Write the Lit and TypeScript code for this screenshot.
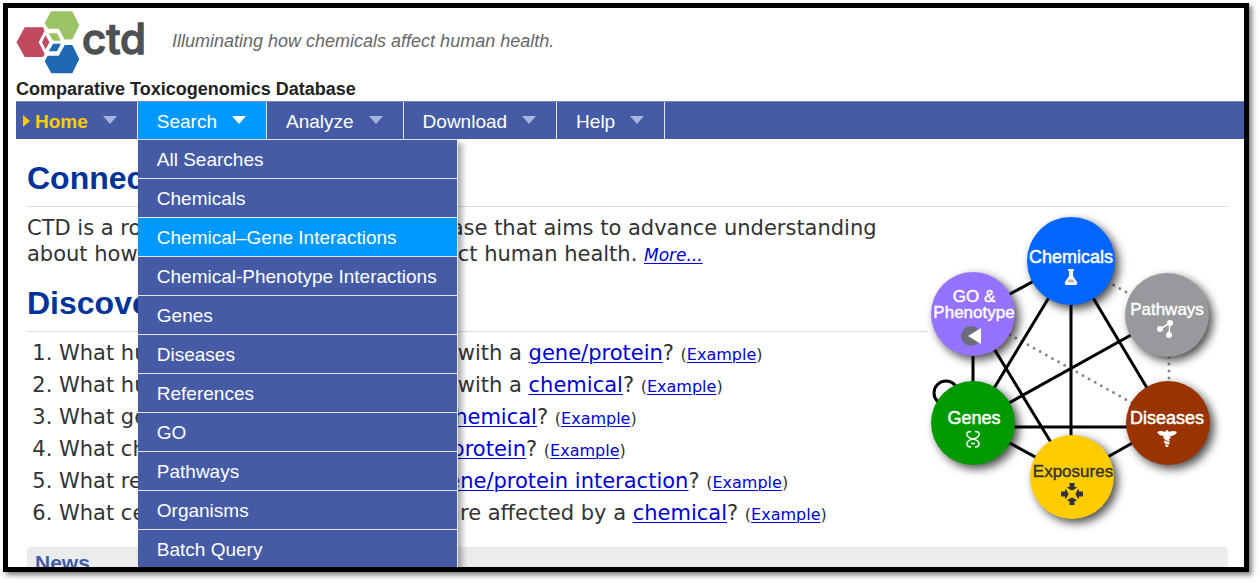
import { LitElement, html, css, svg } from "lit";
import { customElement } from "lit/decorators.js";

const MENU = ["Analyze", "Download", "Help"];
const SEARCH_ITEMS = [
  "All Searches",
  "Chemicals",
  "Chemical–Gene Interactions",
  "Chemical-Phenotype Interactions",
  "Genes",
  "Diseases",
  "References",
  "GO",
  "Pathways",
  "Organisms",
  "Batch Query",
];
const QUESTIONS: [string, string][] = [
  ["What human diseases are associated with a ", "gene/protein"],
  ["What human diseases are associated with a ", "chemical"],
  ["What genes/proteins interact with a ", "chemical"],
  ["What chemicals interact with a ", "gene/protein"],
  ["What references report a ", "chemical–gene/protein interaction"],
  ["What cellular functions or processes are affected by a ", "chemical"],
];

@customElement("ctd-logo")
class CtdLogo extends LitElement {
  static styles = css`
    :host { display: block; }
    svg { display: block; }
    .word { font: 500 42px Inter, "Liberation Sans", sans-serif; fill: #4d5054; stroke: #4d5054; stroke-width: 1.4; }
  `;
  render() {
    return html`<svg width="134" height="64" viewBox="0 0 134 64" role="img" aria-label="ctd">
      <path fill="#9bc366" d="M35 1.3H56.3L63.3 15.3 56.3 29.6H48.7L42.7 18.7H32L28.7 13z" />
      <path fill="#c04a60" d="M8.7 17.3H27L28.6 20.7 22.7 32.3 28.7 44 26.9 47H8.7L.5 32.3z" />
      <path fill="#1f69b3" d="M63.3 49L56.3 63.3H35.3L28.7 51.3 31.6 45.7H42.7L48.7 35H56.3z" />
      <path fill="#9bc366" d="M32.8 23.3H41L44.9 30.7H37z" />
      <path fill="#c04a60" d="M29.5 25.3L33.5 32.3 29.5 39.3 26 32.3z" />
      <path fill="#1f69b3" d="M37 33.8H44.9L41 41.3H32.8z" />
      <text class="word" x="66" y="44">ctd</text>
    </svg>`;
  }
}

@customElement("ctd-diagram")
class CtdDiagram extends LitElement {
  static styles = css`
    :host { display: block; padding-top: 1px; }
    svg { display: block; overflow: visible; }
    .edge { stroke: #000; stroke-width: 3; fill: none; }
    .dots { stroke: #8a8a8a; stroke-width: 3; stroke-linecap: round; stroke-dasharray: 0 7; }
    .node { filter: drop-shadow(4px 4px 5px rgba(0, 0, 0, 0.7)); }
    text { font: 18px "Liberation Sans", sans-serif; text-anchor: middle; fill: #fff; stroke: #fff; stroke-width: 0.5; }
    .small { font-size: 17px; stroke-width: 0.4; }
    .dark { fill: #333; stroke: #333; }
  `;
  private line(a: number[], b: number[], cls: string) {
    return svg`<line class=${cls} x1=${a[0]} y1=${a[1]} x2=${b[0]} y2=${b[1]} />`;
  }
  render() {
    const chem = [143, 53], go = [45, 106], path = [239, 107], gene = [45, 215], dis = [240, 215], exp = [144, 269];
    const solid = [[go, chem], [chem, gene], [chem, [143, 269]], [chem, dis], [go, gene], [go, exp], [path, gene], [gene, exp], [exp, dis]];
    const dotted = [[go, dis], [chem, path], [[241, 107], [241, 215]]];
    const nodes: [number[], string, number][] = [
      [chem, "#0066ff", 44], [go, "#9673ff", 42], [path, "#97999c", 42],
      [gene, "#009900", 42], [dis, "#993300", 42], [exp, "#ffcc00", 42],
    ];
    return html`<svg width="300" height="330" viewBox="0 0 300 330" role="img" aria-label="CTD data relationships">
      ${dotted.map(([a, b]) => this.line(a, b, "dots"))}
      ${solid.map(([a, b]) => this.line(a, b, "edge"))}
      <line class="edge" x1="45" y1="219" x2="241" y2="219" />
      <circle class="edge" cx="18" cy="185" r="12" />
      ${nodes.map(([c, fill, r]) => svg`<circle class="node" cx=${c[0]} cy=${c[1]} r=${r} fill=${fill} />`)}
      <text x="143" y="55">Chemicals</text>
      <text class="small" x="46" y="94">GO &amp;</text>
      <text class="small" x="46" y="110">Phenotype</text>
      <text class="small" x="239" y="107">Pathways</text>
      <text x="46" y="216">Genes</text>
      <text x="239" y="216">Diseases</text>
      <text class="small dark" x="145" y="269">Exposures</text>
      <path fill="#fff" d="M140 61h6v2h-1v5l4 6q1 3-2 3h-8q-3 0-2-3l4-6v-5h-1z" />
      <ellipse cx="143" cy="73" rx="3.5" ry="1.8" fill="#bbb" />
      <circle cx="43" cy="128" r="10" fill="#6b6b7d" />
      <path fill="#fff" d="M40 128l13-8v16z" />
      <path d="M242 115l-10 6M242 115l-1 12" fill="none" stroke="#fff" stroke-width="1.5" />
      <g fill="#fff"><circle cx="232" cy="121" r="3" /><circle cx="242" cy="115" r="3" /><circle cx="241" cy="127" r="3" /></g>
      <path d="M43 223.500q-5 0-4 3.500 1 3 6 4 5 1 6 4 .5 4-4 4M47 223.500q5 0 4 3.500-1 3-6 4-5 1-6 4-.5 4 4 4M43 235.500h4" fill="none" stroke="#fff" stroke-width="1.500" />
      <path fill="#fff" d="M229 224q4-2 8 0 1-2 2-2t2 2q4-2 8 0-2 4-7 4l1 2-2 1 1 3-1 2-1 3h-2l-1-3-1-2 1-3-2-1 1-2q-5 0-7-4z" />
      <path d="M236 232l6 2M236.500 235.500l5 2" stroke="#930" stroke-width=".8" />
      <g fill="#333">
        ${[0, 90, 180, 270].map((a) => svg`<path transform="translate(144 286) rotate(${a})" d="M-2.500 -11h5v4h2.500l-1 1.500-4 2-4-2-1-1.500h2.500z" />`)}
      </g>
    </svg>`;
  }
}

@customElement("app-root")
class AppRoot extends LitElement {
  static styles = css`
    :host {
      display: block;
      box-sizing: border-box;
      height: 100vh;
      padding: 3px 11px 11px 3px;
      background: #fff;
      color: #333;
      font: 21px/26px "DejaVu Sans", sans-serif;
    }
    * { box-sizing: border-box; }
    a { color: #0000d8; text-decoration-thickness: 1px; text-underline-offset: 2px; }
    .frame {
      height: 100%;
      overflow: hidden;
      border: 5px solid #000;
      background: #fff;
      box-shadow: 3px 3px 5px rgba(0, 0, 0, 0.5);
    }
    header { padding: 2px 8px 1px; font-family: "Liberation Sans", sans-serif; }
    .brand { display: flex; gap: 22px; }
    .tagline { margin: 0; padding-top: 18px; font-size: 18px; line-height: 26px; font-style: italic; color: #666; }
    .name { margin: 4px 0 0; font-size: 18px; line-height: 22px; font-weight: bold; color: #222; }
    nav {
      display: flex;
      height: 38px;
      margin-left: 8px;
      background: #455ba6;
      border-top: 1px solid #7d8cc4;
      font: 19px/37px "Liberation Sans", sans-serif;
    }
    .cell { position: relative; border-right: 1px solid #e4e8f4; }
    .top { display: flex; align-items: center; gap: 15px; height: 37px; padding: 2px 20px 0 19px; color: #fff; text-decoration: none; }
    .top::after { content: ""; margin-bottom: 3px; border: 7px solid transparent; border-top: 8px solid #a9b5dc; border-bottom: 0; }
    .home { padding-left: 7px; color: #fc0; font-weight: bold; }
    .home::before { content: ""; margin: 0 -10px 2px 0; border: 6px solid transparent; border-left: 7px solid #fc0; border-right: 0; }
    .open { background: #09f; }
    .open::after { border-top-color: #fff; }
    .menu {
      position: absolute;
      z-index: 2;
      top: 37px;
      left: 0;
      margin: 0;
      padding: 0;
      list-style: none;
      border-top: 1px solid #dde2f2;
      background: #455ba6;
      box-shadow: 4px 4px 6px rgba(0, 0, 0, 0.35);
    }
    .menu a { display: block; height: 39px; padding: 0 20px 0 19px; border-bottom: 1px solid #e4e8f4; border-right: 1px solid #e4e8f4; line-height: 39px; white-space: nowrap; color: #fff; text-decoration: none; }
    .menu .current { background: #09f; }
    main { padding: 19px 16px 0 19px; }
    h2 { margin: 0; padding-bottom: 8px; border-bottom: 1px solid #ddd; font: bold 32px/40px "Liberation Sans", sans-serif; color: #039; }
    .columns { display: flex; }
    .text { flex: 1; min-width: 0; }
    .text p { margin: 8px 0 16px; white-space: nowrap; }
    .more { font-size: 17px; line-height: 1; font-style: italic; }
    ol { margin: 5px 0 0; padding-left: 32px; line-height: 32px; white-space: nowrap; }
    small { font-size: 16px; line-height: 1; }
    .news { margin: 9px 0 0; padding: 0 8px; border-radius: 4px; background: #ebecee; font: bold 21px/32px "Liberation Sans", sans-serif; color: #455ba6; }
  `;
  render() {
    return html`<div class="frame">
      <header>
        <div class="brand">
          <ctd-logo></ctd-logo>
          <p class="tagline">Illuminating how chemicals affect human health.</p>
        </div>
        <p class="name">Comparative Toxicogenomics Database</p>
      </header>
      <nav aria-label="Main">
        <div class="cell"><a class="top home" href="#home">Home</a></div>
        <div class="cell">
          <a class="top open" href="#search">Search</a>
          <ul class="menu">
            ${SEARCH_ITEMS.map((t, i) => html`<li><a class=${i === 2 ? "current" : ""} href="#search">${t}</a></li>`)}
          </ul>
        </div>
        ${MENU.map((t) => html`<div class="cell"><a class="top" href="#menu">${t}</a></div>`)}
      </nav>
      <main>
        <h2>Connect</h2>
        <div class="columns">
          <div class="text">
            <p>CTD is a robust, publicly available database that aims to advance understanding<br />about how environmental exposures affect human health. <a class="more" href="#more">More...</a></p>
            <h2>Discover</h2>
            <ol>
              ${QUESTIONS.map(([q, l]) => html`<li>${q}<a href="#query">${l}</a>? <small>(<a href="#example">Example</a>)</small></li>`)}
            </ol>
          </div>
          <ctd-diagram></ctd-diagram>
        </div>
        <h3 class="news">News</h3>
      </main>
    </div>`;
  }
}
